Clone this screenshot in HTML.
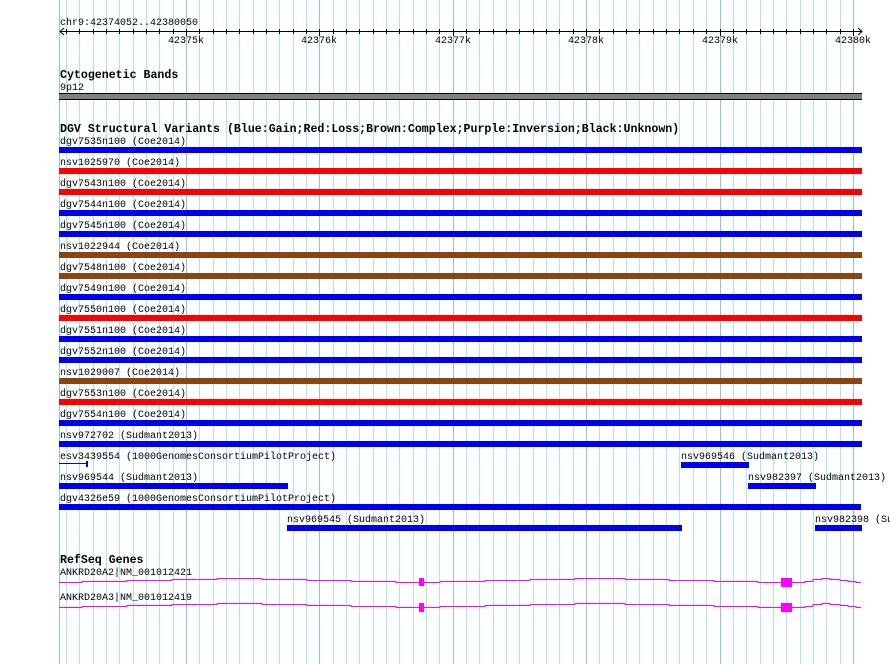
<!DOCTYPE html>
<html><head><meta charset="utf-8"><style>
html,body{margin:0;padding:0;background:#fff;width:890px;height:664px;overflow:hidden}
svg{display:block}
text{font-family:"Liberation Mono",monospace;font-size:10px;fill:#000}
.b{font-weight:bold;font-size:11.6px}
</style></head><body>
<svg width="890" height="664" xmlns="http://www.w3.org/2000/svg" shape-rendering="crispEdges">
<path fill="none" stroke="#a8e6f0" stroke-width="1" d="M66.5 0v664M79.5 0v664M93.5 0v664M106.5 0v664M119.5 0v664M133.5 0v664M146.5 0v664M159.5 0v664M173.5 0v664M199.5 0v664M213.5 0v664M226.5 0v664M239.5 0v664M253.5 0v664M266.5 0v664M279.5 0v664M293.5 0v664M306.5 0v664M333.5 0v664M346.5 0v664M359.5 0v664M373.5 0v664M386.5 0v664M399.5 0v664M413.5 0v664M426.5 0v664M439.5 0v664M466.5 0v664M479.5 0v664M493.5 0v664M506.5 0v664M519.5 0v664M533.5 0v664M546.5 0v664M559.5 0v664M573.5 0v664M599.5 0v664M613.5 0v664M626.5 0v664M639.5 0v664M653.5 0v664M666.5 0v664M679.5 0v664M693.5 0v664M706.5 0v664M733.5 0v664M746.5 0v664M760.5 0v664M773.5 0v664M786.5 0v664M800.5 0v664M813.5 0v664M826.5 0v664M840.5 0v664"/>
<path fill="none" stroke="#88c4e6" stroke-width="1" d="M59.5 0v664M186.5 0v664M319.5 0v664M453.5 0v664M586.5 0v664M720.5 0v664M853.5 0v664"/>

<!-- ruler -->
<text x="60" y="25">chr9:42374052..42380050</text>
<line x1="60" y1="31.5" x2="862" y2="31.5" stroke="#000"/>
<polyline points="64,28 60,31.5 64,35" fill="none" stroke="#000" shape-rendering="auto"/>
<polyline points="858,28 862,31.5 858,35" fill="none" stroke="#000" shape-rendering="auto"/>
<g stroke="#000">
<path d="M66.5 29v5M79.5 29v5M93.5 29v5M106.5 29v5M119.5 29v5M133.5 29v5M146.5 29v5M159.5 29v5M173.5 29v5M186.5 29v7M199.5 29v5M213.5 29v5M226.5 29v5M239.5 29v5M253.5 29v5M266.5 29v5M279.5 29v5M293.5 29v5M306.5 29v5M319.5 29v7M333.5 29v5M346.5 29v5M359.5 29v5M373.5 29v5M386.5 29v5M399.5 29v5M413.5 29v5M426.5 29v5M439.5 29v5M453.5 29v7M466.5 29v5M479.5 29v5M493.5 29v5M506.5 29v5M519.5 29v5M533.5 29v5M546.5 29v5M559.5 29v5M573.5 29v5M586.5 29v7M599.5 29v5M613.5 29v5M626.5 29v5M639.5 29v5M653.5 29v5M666.5 29v5M679.5 29v5M693.5 29v5M706.5 29v5M720.5 29v7M733.5 29v5M746.5 29v5M760.5 29v5M773.5 29v5M786.5 29v5M800.5 29v5M813.5 29v5M826.5 29v5M840.5 29v5M853.5 29v7"/>
</g>
<text x="186" y="43" text-anchor="middle">42375k</text>
<text x="319" y="43" text-anchor="middle">42376k</text>
<text x="453" y="43" text-anchor="middle">42377k</text>
<text x="586" y="43" text-anchor="middle">42378k</text>
<text x="720" y="43" text-anchor="middle">42379k</text>
<text x="853" y="43" text-anchor="middle">42380k</text>

<!-- cytoband -->
<text class="b" x="60" y="78">Cytogenetic Bands</text>
<text x="60" y="90">9p12</text>
<rect x="59" y="93" width="803" height="7" fill="#808080"/>
<rect x="59" y="93" width="803" height="1" fill="#000"/>
<rect x="59" y="99" width="803" height="1" fill="#000"/>

<!-- DGV -->
<text class="b" x="60" y="132">DGV Structural Variants (Blue:Gain;Red:Loss;Brown:Complex;Purple:Inversion;Black:Unknown)</text>
<g>
<text x="60" y="144">dgv7535n100 (Coe2014)</text><rect x="59" y="147" width="803" height="6" fill="#0000f0"/>
<text x="60" y="165">nsv1025970 (Coe2014)</text><rect x="59" y="168" width="803" height="6" fill="#f00"/>
<text x="60" y="186">dgv7543n100 (Coe2014)</text><rect x="59" y="189" width="803" height="6" fill="#f00"/>
<text x="60" y="207">dgv7544n100 (Coe2014)</text><rect x="59" y="210" width="803" height="6" fill="#0000f0"/>
<text x="60" y="228">dgv7545n100 (Coe2014)</text><rect x="59" y="231" width="803" height="6" fill="#0000f0"/>
<text x="60" y="249">nsv1022944 (Coe2014)</text><rect x="59" y="252" width="803" height="6" fill="#8b4513"/>
<text x="60" y="270">dgv7548n100 (Coe2014)</text><rect x="59" y="273" width="803" height="6" fill="#8b4513"/>
<text x="60" y="291">dgv7549n100 (Coe2014)</text><rect x="59" y="294" width="803" height="6" fill="#0000f0"/>
<text x="60" y="312">dgv7550n100 (Coe2014)</text><rect x="59" y="315" width="803" height="6" fill="#f00"/>
<text x="60" y="333">dgv7551n100 (Coe2014)</text><rect x="59" y="336" width="803" height="6" fill="#0000f0"/>
<text x="60" y="354">dgv7552n100 (Coe2014)</text><rect x="59" y="357" width="803" height="6" fill="#0000f0"/>
<text x="60" y="375">nsv1029007 (Coe2014)</text><rect x="59" y="378" width="803" height="6" fill="#8b4513"/>
<text x="60" y="396">dgv7553n100 (Coe2014)</text><rect x="59" y="399" width="803" height="6" fill="#f00"/>
<text x="60" y="417">dgv7554n100 (Coe2014)</text><rect x="59" y="420" width="803" height="6" fill="#0000f0"/>
<text x="60" y="438">nsv972702 (Sudmant2013)</text><rect x="59" y="441" width="803" height="6" fill="#0000f0"/>

<text x="60" y="459">esv3439554 (1000GenomesConsortiumPilotProject)</text>
<rect x="59" y="463" width="28" height="1" fill="#0000f0"/><rect x="86" y="461" width="2" height="6" fill="#0000f0"/>
<text x="681" y="459">nsv969546 (Sudmant2013)</text><rect x="681" y="462" width="68" height="6" fill="#0000f0"/>

<text x="60" y="480">nsv969544 (Sudmant2013)</text><rect x="59" y="483" width="229" height="6" fill="#0000f0"/>
<text x="748" y="480">nsv982397 (Sudmant2013)</text><rect x="748" y="483" width="68" height="6" fill="#0000f0"/>

<text x="60" y="501">dgv4326e59 (1000GenomesConsortiumPilotProject)</text><rect x="59" y="504" width="802" height="6" fill="#0000f0"/>

<text x="287" y="522">nsv969545 (Sudmant2013)</text><rect x="287" y="525" width="395" height="6" fill="#0000f0"/>
<text x="815" y="522">nsv982398 (Su</text><rect x="815" y="525" width="47" height="6" fill="#0000f0"/>
</g>

<!-- RefSeq -->
<text class="b" x="60" y="563">RefSeq Genes</text>
<text x="60" y="575">ANKRD20A2|NM_001012421</text>
<text x="60" y="600">ANKRD20A3|NM_001012419</text>
<g id="gene" fill="none" stroke="#ff00ff">
<polyline points="59,582.5 82,582.5 82,581.5 127,581.5 127,580.5 172,580.5 172,579.5 217,579.5 217,578.5 262,578.5 262,579.5 307,579.5 307,580.5 351,580.5 351,581.5 396,581.5 396,582.5 419,582.5"/>
<polyline points="424,582.5 440,582.5 440,581.5 485,581.5 485,580.5 530,580.5 530,579.5 575,579.5 575,578.5 625,578.5 625,579.5 669,579.5 669,580.5 714,580.5 714,581.5 758,581.5 758,582.5 781,582.5"/>
<polyline points="792,582.5 805,582.5 805,581.5 813,581.5 813,579.5 822,579.5 822,578.5 830,578.5 830,579.5 840,579.5 840,580.5 848,580.5 848,581.5 856,581.5 856,582.5 861,582.5"/>
</g>
<rect x="419" y="578" width="5" height="8" fill="#ff00ff"/>
<rect x="781" y="578" width="11" height="9" fill="#ff00ff"/>
<use href="#gene" transform="translate(0,25)"/>
<rect x="419" y="603" width="5" height="9" fill="#ff00ff"/>
<rect x="781" y="603" width="11" height="9" fill="#ff00ff"/>
</svg>
</body></html>
